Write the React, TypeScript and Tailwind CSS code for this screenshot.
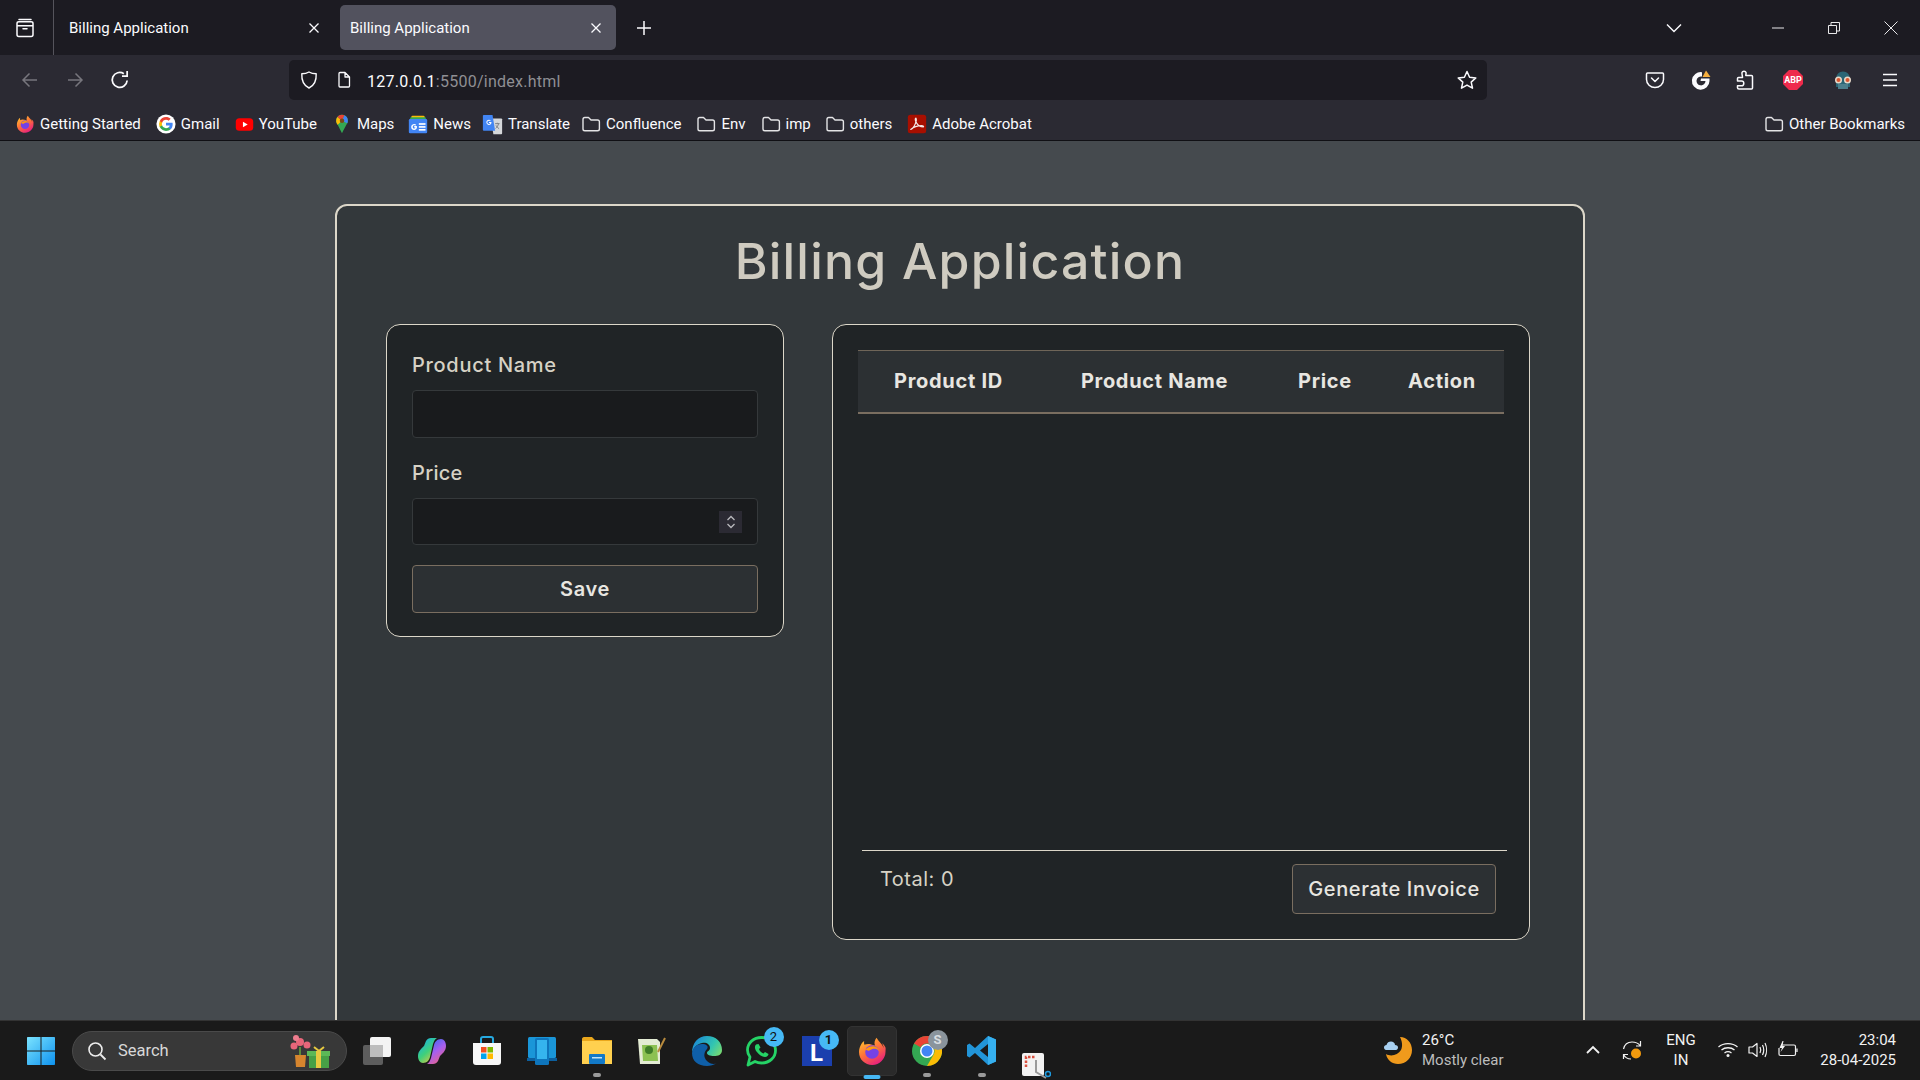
import { ReactNode } from 'react';

const ui = "font-['Roboto',sans-serif]";
const pop = "font-['Inter',sans-serif]";

function Svg({ size = 20, vb = 24, className = '', children }: { size?: number; vb?: number; className?: string; children: ReactNode }) {
  return (
    <svg width={size} height={size} viewBox={`0 0 ${vb} ${vb}`} fill="none" className={`shrink-0 ${className}`}>
      {children}
    </svg>
  );
}

function FolderIcon() {
  return (
    <Svg size={20} vb={20}>
      <path d="M2 5.500C2 4.400 2.800 3.500 3.800 3.500H7.500L10 6H16.500C17.600 6 18.400 6.800 18.400 7.800V15C18.400 16 17.600 16.800 16.500 16.800H3.800C2.800 16.800 2 16 2 15V5.500Z" stroke="#e4e4e6" strokeWidth="1.400" strokeLinejoin="round" />
    </Svg>
  );
}

function FirefoxIcon({ size = 20 }: { size?: number }) {
  return (
    <Svg size={size} vb={32}>
      <defs>
        <linearGradient id="ffBody" x1="8" y1="4" x2="24" y2="30" gradientUnits="userSpaceOnUse">
          <stop offset="0" stopColor="#ffbd2e" />
          <stop offset="0.45" stopColor="#ff7139" />
          <stop offset="1" stopColor="#e31587" />
        </linearGradient>
      </defs>
      <path d="M29.500 12.500C28.800 10.800 27.300 9 26.100 8.300C27 10.200 27.500 11.800 27.700 13C25.900 8.500 22.900 6.800 20.500 2.800C18.800 5 17.800 8 19 10.500C14 8.500 10.500 8.500 8.500 9.800C8 8.800 7.900 7.200 8.200 6C6.800 6.900 5.800 8.200 5.100 9.500C4.100 11.300 3 14 3 17C3 24.500 9 30 16.300 30C23.500 30 29.500 24 29.500 16.800C29.500 15.300 29.800 14 29.500 12.500Z" fill="url(#ffBody)" />
      <circle cx="16" cy="17" r="6.800" fill="#7542e5" />
      <path d="M9.500 15C11 12 14.500 10.800 17.500 11.200C20.500 11.600 22.500 13.500 23 16C21.500 13.800 18.500 13.500 16.500 14C14.500 14.500 13 16.500 12 15.500C11 14.800 10 14.800 9.500 15Z" fill="#ff980e" />
    </Svg>
  );
}

function GoogleIcon() {
  return (
    <Svg size={20} vb={24}>
      <circle cx="12" cy="12" r="11.500" fill="#fff" />
      <path d="M20 12.200c0-.6-.1-1.200-.2-1.700H12v3.300h4.500c-.2 1-.8 1.900-1.700 2.500v2.100h2.700c1.600-1.500 2.500-3.600 2.500-6.200Z" fill="#4285f4" />
      <path d="M12 20.300c2.200 0 4.100-.7 5.500-2l-2.700-2.100c-.7.500-1.700.8-2.800.8-2.200 0-4-1.400-4.700-3.400H4.500v2.100c1.400 2.800 4.200 4.600 7.500 4.600Z" fill="#34a853" />
      <path d="M7.300 13.600c-.4-1-.4-2.200 0-3.200V8.300H4.500a8.300 8.300 0 0 0 0 7.400l2.800-2.100Z" fill="#fbbc05" />
      <path d="M12 7c1.200 0 2.300.4 3.200 1.200l2.400-2.400C16.100 4.500 14.200 3.700 12 3.700c-3.300 0-6.100 1.800-7.500 4.600l2.800 2.100C8 8.400 9.800 7 12 7Z" fill="#ea4335" />
    </Svg>
  );
}

function YouTubeIcon() {
  return (
    <Svg size={19} vb={24}>
      <rect x="1" y="4" width="22" height="16" rx="4.500" fill="#f00" />
      <path d="M10 8.500V15.500L16 12L10 8.500Z" fill="#fff" />
    </Svg>
  );
}

function MapsIcon() {
  return (
    <Svg size={20} vb={24}>
      <path d="M12 1C7.900 1 5 4.100 5 8c0 2 .8 3.500 1.800 5L12 23c1.700-3.400 3.400-6.300 5.200-10 1-1.500 1.800-3 1.800-5 0-3.900-2.900-7-7-7Z" fill="#34a853" />
      <path d="M6.800 13C5.800 11.500 5 10 5 8c0-1.700.6-3.300 1.600-4.500L12 8 6.800 13Z" fill="#fbbc05" />
      <path d="M6.600 3.500C7.900 2 9.800 1 12 1c1.100 0 2.100.2 3 .6L12 8 6.600 3.500Z" fill="#ea4335" />
      <path d="M15 1.600C17.400 2.700 19 5.100 19 8c0 1.200-.3 2.200-.7 3.100L12 8l3-6.400Z" fill="#4285f4" />
      <circle cx="12" cy="8" r="2.700" fill="#7a4a14" />
    </Svg>
  );
}

function NewsIcon() {
  return (
    <Svg size={20} vb={24}>
      <rect x="4" y="2" width="16" height="6" rx="1.500" fill="#fbbc05" />
      <rect x="2.500" y="4" width="19" height="5" rx="1.500" fill="#34a853" />
      <rect x="1" y="6" width="22" height="17" rx="1.500" fill="#4285f4" />
      <rect x="13" y="11" width="8" height="2" fill="#fff" />
      <rect x="13" y="14.500" width="8" height="2" fill="#fff" />
      <rect x="13" y="18" width="8" height="2" fill="#fff" />
      <path d="M10.500 14.500H7.500V16.200H9C8.800 17 8.200 17.400 7.400 17.400C6.400 17.400 5.700 16.600 5.700 15.500C5.700 14.400 6.400 13.600 7.400 13.600C7.900 13.600 8.300 13.800 8.600 14.100L9.900 12.900C9.300 12.300 8.400 11.900 7.400 11.900C5.400 11.900 3.800 13.500 3.800 15.500C3.800 17.500 5.400 19.100 7.400 19.100C9.400 19.100 10.800 17.700 10.800 15.600C10.800 15.200 10.600 14.800 10.500 14.500Z" fill="#fff" />
    </Svg>
  );
}

function TranslateIcon() {
  return (
    <Svg size={21} vb={24}>
      <path d="M10 5H22C22.600 5 23 5.400 23 6V22C23 22.600 22.600 23 22 23H13L10 5Z" fill="#d5d7da" />
      <path d="M2 1H12L15 19H2C1.400 19 1 18.600 1 18V2C1 1.400 1.400 1 2 1Z" fill="#4285f4" />
      <path d="M8 6.500C6.300 6.500 5 7.900 5 9.500C5 11.200 6.300 12.500 8 12.500C9.600 12.500 10.800 11.400 10.800 9.700V9.200H8V10.300H9.500C9.300 11 8.800 11.400 8 11.400C6.900 11.400 6.100 10.500 6.100 9.500C6.100 8.500 6.900 7.600 8 7.600C8.500 7.600 8.900 7.800 9.200 8L10 7.300C9.500 6.800 8.800 6.500 8 6.500Z" fill="#fff" />
      <path d="M15 11H20M17.500 10V11M19 11C18.500 13 17 15.500 15.500 16.500M16 13C16.800 14.500 18 16 19.500 16.800" stroke="#7b7f85" strokeWidth="1.100" />
    </Svg>
  );
}

function AcrobatIcon() {
  return (
    <Svg size={20} vb={24}>
      <rect x="1" y="1" width="22" height="22" rx="3" fill="#a80f00" />
      <path d="M4.500 18.500C7 17.500 9.800 13 11 8.500C11.400 6.500 11 5 10.500 5C9.800 5.500 10 8 11.500 10.800C13.300 14 16 15.500 19.500 15.500C20.500 15 19.500 14 17.500 14C13.500 14 8 15.500 4.500 18.500Z" stroke="#f6e9e6" strokeWidth="1.500" strokeLinejoin="round" />
    </Svg>
  );
}

function Bookmark({ icon, label, className }: { icon: ReactNode; label: string; className: string }) {
  return (
    <div className={`flex items-center gap-[5px] ${className}`}>
      {icon}
      <span className="whitespace-nowrap">{label}</span>
    </div>
  );
}

function TabClose() {
  return (
    <Svg size={16} vb={16}>
      <path d="M3.500 3.500L12.500 12.500M12.500 3.500L3.500 12.500" stroke="#fbfbfe" strokeWidth="1.300" />
    </Svg>
  );
}

function TabStrip() {
  return (
    <div className={`flex h-[55px] items-center bg-[#1c1b22] text-[15px] text-[#fbfbfe] ${ui}`}>
      <div className="flex h-full w-[54px] items-center justify-center border-r border-[#55545c] pr-[4px]">
        <Svg size={22} vb={22}>
          <path d="M5 2.500H17M3 6.500C3 5.400 3.800 4.800 4.800 4.800H17.200C18.200 4.800 19 5.400 19 6.500V17.500C19 18.800 18.200 19.500 17.200 19.500H4.800C3.800 19.500 3 18.800 3 17.500V6.500ZM3 8.800H19M9 11.800H13" stroke="#fbfbfe" strokeWidth="1.500" strokeLinecap="round" />
        </Svg>
      </div>
      <div className="flex h-full w-[286px] items-center justify-between pl-[15px] pr-[18px]">
        <span className="pt-[2px]">Billing Application</span>
        <TabClose />
      </div>
      <div className="flex h-[45px] w-[276px] items-center justify-between rounded-[5px] bg-[#52525e] pl-[10px] pr-[12px]">
        <span className="pt-[2px]">Billing Application</span>
        <TabClose />
      </div>
      <div className="ml-[18px]">
        <Svg size={20} vb={20}>
          <path d="M10 3V17M3 10H17" stroke="#fbfbfe" strokeWidth="1.500" />
        </Svg>
      </div>
      <div className="ml-auto mr-[67px]">
        <Svg size={18} vb={18}>
          <path d="M2 5.500L9 12.500L16 5.500" stroke="#fbfbfe" strokeWidth="1.400" />
        </Svg>
      </div>
      <div className="flex w-[170px] items-center justify-between pl-[21px] pr-[21px]">
        <Svg size={14} vb={14}>
          <path d="M1 7H13" stroke="#e8e8ea" strokeWidth="1" />
        </Svg>
        <Svg size={14} vb={14}>
          <path d="M1.500 4.500H9.500V12.500H1.500V4.500ZM4 4.500V1.500H12.500V10H9.500" stroke="#e8e8ea" strokeWidth="1" />
        </Svg>
        <Svg size={16} vb={16}>
          <path d="M1.500 1.500L14.500 14.500M14.500 1.500L1.500 14.500" stroke="#e8e8ea" strokeWidth="1" />
        </Svg>
      </div>
    </div>
  );
}

function Toolbar() {
  return (
    <div className={`flex h-[50px] items-center bg-[#2b2a33] ${ui}`}>
      <div className="flex w-[289px] items-center pl-[20px]">
        <Svg size={20} vb={20}>
          <path d="M17 10H3.500M9.500 3.500L3 10L9.500 16.500" stroke="#77767d" strokeWidth="1.500" />
        </Svg>
        <Svg size={20} vb={20} className="ml-[25px]">
          <path d="M3 10H16.500M10.500 3.500L17 10L10.500 16.500" stroke="#77767d" strokeWidth="1.500" />
        </Svg>
        <Svg size={22} vb={20} className="ml-[24px]">
          <path d="M16.500 10.500A6.800 6.800 0 1 1 13.500 4.300M16.500 1.800V6.500H11.800" stroke="#fbfbfe" strokeWidth="1.600" />
        </Svg>
      </div>
      <div className="flex h-[40px] w-[1198px] items-center rounded-[5px] bg-[#1c1b22] pl-[10px] pr-[9px]">
        <Svg size={20} vb={20}>
          <path d="M10 2C7.500 3.500 5 3.800 2.800 3.800C2.500 10 4.500 15.500 10 18C15.500 15.500 17.500 10 17.200 3.800C15 3.800 12.500 3.500 10 2Z" stroke="#fbfbfe" strokeWidth="1.400" strokeLinejoin="round" />
        </Svg>
        <Svg size={18} vb={18} className="ml-[16px]">
          <path d="M4 2.500C4 1.900 4.500 1.500 5 1.500H10L14.500 6V15C14.500 15.600 14 16 13.500 16H5C4.500 16 4 15.600 4 15V2.500ZM10 1.500V6H14.500" stroke="#fbfbfe" strokeWidth="1.300" strokeLinejoin="round" />
        </Svg>
        <span className="ml-[14px] pt-[3px] text-[16px] tracking-[0.25px] text-[#fbfbfe]">
          127.0.0.1<span className="text-[#8f8f94]">:5500/index.html</span>
        </span>
        <Svg size={22} vb={22} className="ml-auto">
          <path d="M11 2.500L13.600 8.200L19.800 8.900L15.200 13.100L16.500 19.200L11 16.100L5.500 19.200L6.800 13.100L2.200 8.900L8.400 8.200L11 2.500Z" stroke="#fbfbfe" strokeWidth="1.500" strokeLinejoin="round" />
        </Svg>
      </div>
      <div className="flex flex-1 items-center pl-[158px]">
        <Svg size={20} vb={20}>
          <path d="M2.500 3H17.500C18 3 18.500 3.500 18.500 4V9.500C18.500 14 14.500 17.500 10 17.500C5.500 17.500 1.500 14 1.500 9.500V4C1.500 3.500 2 3 2.500 3ZM6.500 8L10 11.500L13.500 8" stroke="#fbfbfe" strokeWidth="1.500" strokeLinecap="round" strokeLinejoin="round" />
        </Svg>
        <Svg size={22} vb={22} className="ml-[25px]">
          <path d="M19.500 12A8.800 8.800 0 1 1 12 3.200V7.500A4.500 4.500 0 1 0 15.500 12H10.500L11 9.500H19.500V12Z" fill="#fbfbfe" />
          <path d="M16 1.500L20.500 8H12.500L16 1.500Z" fill="#f5ae3d" />
        </Svg>
        <Svg size={22} vb={22} className="ml-[22px]">
          <path d="M8 3.500C8.500 1.800 11.500 1.800 12 3.500C12.300 4.500 11.800 5 11.800 6.500H17.500C18.200 6.500 18.500 7 18.500 7.500V19C18.500 19.700 18 20 17.500 20H5C4 20 3.500 19.500 3.500 18.800V16.800H7.500C9 16.800 9.800 15.500 9.800 14.200C9.800 12.800 8.800 12 7.500 12H3.500V9.500C3.500 9 4 8.500 4.500 8.500H8.500C8.500 6.500 7.700 5 8 3.500Z" stroke="#fbfbfe" strokeWidth="1.500" strokeLinejoin="round" />
        </Svg>
        <Svg size={22} vb={22} className="ml-[26px]">
          <path d="M7 1H15L21 7V15L15 21H7L1 15V7L7 1Z" fill="#ee2a4c" />
          <text x="11" y="14.300" textAnchor="middle" fontSize="9" fontWeight="700" fill="#fff" fontFamily="Roboto, sans-serif">ABP</text>
        </Svg>
        <Svg size={24} vb={24} className="ml-[27px]">
          <path d="M5 11C5 6.500 8 3.500 12 3.500C16 3.500 19 6.500 19 11V19H5V11Z" fill="#2a6675" />
          <rect x="7" y="16" width="10" height="5" fill="#4c7f8c" />
          <circle cx="7.500" cy="12" r="3.500" fill="#e7d9c9" />
          <circle cx="16.500" cy="12" r="3.500" fill="#e7d9c9" />
          <circle cx="7.500" cy="12" r="2" fill="#d9552e" />
          <circle cx="16.500" cy="12" r="2" fill="#d9552e" />
        </Svg>
        <Svg size={18} vb={18} className="ml-[26px]">
          <path d="M2 3.500H16M2 9H16M2 14.500H16" stroke="#fbfbfe" strokeWidth="1.500" />
        </Svg>
      </div>
    </div>
  );
}

function BookmarksBar() {
  return (
    <div className={`flex h-[36px] items-center border-b border-[#101014] bg-[#2b2a33] pl-[15px] pr-[15px] pt-[3px] text-[15px] text-[#fbfbfe] ${ui}`}>
      <Bookmark className="mr-[15px]" icon={<FirefoxIcon />} label="Getting Started" />
      <Bookmark className="mr-[15px]" icon={<GoogleIcon />} label="Gmail" />
      <Bookmark className="mr-[15px]" icon={<YouTubeIcon />} label="YouTube" />
      <Bookmark className="mr-[14px]" icon={<MapsIcon />} label="Maps" />
      <Bookmark className="mr-[11px]" icon={<NewsIcon />} label="News" />
      <Bookmark className="mr-[11px]" icon={<TranslateIcon />} label="Translate" />
      <Bookmark className="mr-[15px]" icon={<FolderIcon />} label="Confluence" />
      <Bookmark className="mr-[15px]" icon={<FolderIcon />} label="Env" />
      <Bookmark className="mr-[14px]" icon={<FolderIcon />} label="imp" />
      <Bookmark className="mr-[15px]" icon={<FolderIcon />} label="others" />
      <Bookmark className="" icon={<AcrobatIcon />} label="Adobe Acrobat" />
      <Bookmark className="ml-auto" icon={<FolderIcon />} label="Other Bookmarks" />
    </div>
  );
}

function ProductForm() {
  return (
    <div className={`h-[313px] w-[398px] shrink-0 rounded-[14px] border-[1.500px] border-[#dcd7c9] bg-[#202426] px-[25px] pt-[26px] ${pop}`}>
      <label className="block h-[29px] text-[20px] leading-[29px] font-medium tracking-[0.7px] text-[#d6d2c5]">Product Name</label>
      <div className="mt-[10px] h-[48px] rounded-[4px] border border-[#35393b] bg-[#191b1d]" />
      <label className="mt-[21px] block h-[29px] text-[20px] leading-[29px] font-medium tracking-[0.3px] text-[#d6d2c5]">Price</label>
      <div className="mt-[10px] flex h-[47px] items-center justify-end rounded-[4px] border border-[#35393b] bg-[#191b1d] pr-[15px]">
        <div className="flex h-[22px] w-[23px] items-center justify-center bg-[#2b2a33]">
          <Svg size={16} vb={16}>
            <path d="M4.500 6L8 2.500L11.500 6M4.500 10L8 13.500L11.500 10" stroke="#b9b9bd" strokeWidth="1.300" />
          </Svg>
        </div>
      </div>
      <button className="mt-[20px] h-[48px] w-full rounded-[4px] border border-[#7a6e60] bg-[#2c3033] text-[20px] font-semibold tracking-[0.6px] text-[#e8e6e1]">
        Save
      </button>
    </div>
  );
}

function ProductTable() {
  return (
    <div className={`flex h-[616px] w-[698px] shrink-0 flex-col rounded-[14px] border-[1.500px] border-[#dcd7c9] bg-[#202426] pl-[25px] pt-[25px] ${pop}`}>
      <table className="w-[646px] table-fixed border-collapse">
        <thead>
          <tr className="h-[62px] border-t border-b-2 border-t-[#6f6558] border-b-[#7a6e60] bg-[#2c3033] text-[20px] tracking-[0.7px] text-[#e8e6e1]">
            <th className="w-[181px] text-center font-bold">Product ID</th>
            <th className="w-[231px] text-center font-bold">Product Name</th>
            <th className="w-[110px] text-center font-bold">Price</th>
            <th className="w-[124px] text-center font-bold">Action</th>
          </tr>
        </thead>
      </table>
      <div className="flex-1" />
      <div className="mb-[24px] ml-[4px] flex h-[65px] w-[645px] items-start justify-between border-t border-[#dcd7c9] pr-[11px] pt-[13px]">
        <span className="pl-[18px] text-[20px] leading-[30px] tracking-[0.5px] text-[#d6d2c5]">Total: 0</span>
        <button className="h-[50px] w-[204px] rounded-[4px] border border-[#7a6e60] bg-[#2c3033] text-[20px] font-medium tracking-[0.6px] text-[#e8e6e1]">
          Generate Invoice
        </button>
      </div>
    </div>
  );
}

function Page() {
  return (
    <main className="min-h-0 flex-1 overflow-hidden bg-[#454a4e] pl-[335px] pt-[63px]">
      <div className="h-[1000px] w-[1250px] rounded-[12px] border-2 border-[#dcd7c9] bg-[#33383b] pl-[49px] pt-[22px]">
        <h1 className={`-ml-[49px] h-[70px] text-center text-[50px] leading-[66px] font-medium tracking-[1.200px] text-[#cfcbc0] ${pop}`}>
          Billing Application
        </h1>
        <div className="mt-[26px] flex items-start gap-[48px]">
          <ProductForm />
          <ProductTable />
        </div>
      </div>
    </main>
  );
}

function WinLogo() {
  return (
    <Svg size={30} vb={30}>
      <defs>
        <linearGradient id="win" x1="0" y1="0" x2="30" y2="30" gradientUnits="userSpaceOnUse">
          <stop offset="0" stopColor="#7fe6ff" />
          <stop offset="1" stopColor="#0a8fee" />
        </linearGradient>
      </defs>
      <path d="M1 2C1 1.400 1.400 1 2 1H14.500V14.500H1V2ZM15.500 1H28C28.600 1 29 1.400 29 2V14.500H15.500V1ZM1 15.500H14.500V29H2C1.400 29 1 28.600 1 28V15.500ZM15.500 15.500H29V28C29 28.600 28.600 29 28 29H15.500V15.500Z" fill="url(#win)" />
    </Svg>
  );
}

function Slot({ children, dot, className = '' }: { children: ReactNode; dot?: boolean; className?: string }) {
  return (
    <div className={`relative flex h-[59px] w-[55px] shrink-0 items-center justify-center ${className}`}>
      {children}
      {dot && <div className="absolute bottom-[3px] left-1/2 h-[4px] w-[8px] -translate-x-1/2 rounded-full bg-[#9a9a9a]" />}
    </div>
  );
}

function Badge({ children, className }: { children: ReactNode; className: string }) {
  return (
    <div className={`absolute flex h-[20px] w-[20px] items-center justify-center rounded-full text-[13px] ${className}`}>
      {children}
    </div>
  );
}

function Taskbar() {
  return (
    <div className={`flex h-[60px] items-center border-t border-[#333] bg-[#1a1a1a] text-[#f2f2f2] ${ui}`}>
      <div className="ml-[26px] mr-[16px]">
        <WinLogo />
      </div>
      <div className="flex h-[40px] w-[275px] items-center rounded-full border border-[#4a4a4a] bg-[#383838] pl-[14px] pr-[15px]">
        <Svg size={20} vb={20}>
          <circle cx="8.500" cy="8.500" r="6.500" stroke="#ededed" strokeWidth="1.600" />
          <path d="M13.500 13.500L18.500 18.500" stroke="#ededed" strokeWidth="1.800" />
        </Svg>
        <span className="ml-[11px] pt-[2px] text-[16.500px] text-[#d8d8d8]">Search</span>
        <Svg size={44} vb={44} className="ml-auto">
          <circle cx="13" cy="13" r="4" fill="#e8667a" />
          <circle cx="7" cy="17" r="3.500" fill="#e8667a" />
          <circle cx="20" cy="16" r="3.500" fill="#e8667a" />
          <circle cx="9" cy="9" r="3" fill="#ee7d8e" />
          <path d="M13 18V26" stroke="#5d8a3a" strokeWidth="2" />
          <path d="M8 26H19L18 38H9L8 26Z" fill="#d6852e" />
          <rect x="22" y="24" width="20" height="15" fill="#47a046" />
          <rect x="20" y="22" width="23" height="5" fill="#5cb857" />
          <rect x="29" y="22" width="5" height="17" fill="#e7c940" />
          <path d="M27 18L32 22L37 18" stroke="#e7c940" strokeWidth="2" />
        </Svg>
      </div>
      <div className="ml-[2px] flex items-center">
        <Slot>
          <Svg size={30} vb={30}>
            <rect x="8" y="1" width="21" height="20" rx="2" fill="#f4f4f4" />
            <rect x="1" y="9" width="20" height="20" rx="2" fill="#6a6a6a" fillOpacity="0.85" />
            <rect x="8" y="9" width="13" height="12" fill="#bdbdbd" />
          </Svg>
        </Slot>
        <Slot>
          <Svg size={30} vb={30}>
            <defs>
              <linearGradient id="cp1" x1="2" y1="5" x2="20" y2="25" gradientUnits="userSpaceOnUse">
                <stop offset="0" stopColor="#19b2e8" />
                <stop offset="0.5" stopColor="#3fd07a" />
                <stop offset="1" stopColor="#f5c73a" />
              </linearGradient>
              <linearGradient id="cp2" x1="12" y1="3" x2="29" y2="25" gradientUnits="userSpaceOnUse">
                <stop offset="0" stopColor="#2a6cf0" />
                <stop offset="0.5" stopColor="#a65ff0" />
                <stop offset="1" stopColor="#f2637e" />
              </linearGradient>
            </defs>
            <path d="M9 5C10 3 12 2 14 2H20C18 3 17 5 16 8L13 21C12.300 24 10 27 6 27C3 27 1 24 1 20C1 15 5 12 7 10L9 5Z" fill="url(#cp1)" />
            <path d="M21 25C20 27 18 28 16 28H10C12 27 13 25 14 22L17 9C17.700 6 20 3 24 3C27 3 29 6 29 10C29 15 25 18 23 20L21 25Z" fill="url(#cp2)" />
          </Svg>
        </Slot>
        <Slot>
          <Svg size={30} vb={30}>
            <path d="M9 7V3C9 1.500 10 1 11 1H19C20 1 21 1.500 21 3V7" stroke="#26a9e0" strokeWidth="2" />
            <path d="M1 7H29V26C29 28 28 29 26 29H4C2 29 1 28 1 26V7Z" fill="#f7f7f7" />
            <rect x="9" y="11" width="5.500" height="5.500" fill="#f25022" />
            <rect x="15.500" y="11" width="5.500" height="5.500" fill="#7fba00" />
            <rect x="9" y="17.500" width="5.500" height="5.500" fill="#00a4ef" />
            <rect x="15.500" y="17.500" width="5.500" height="5.500" fill="#ffb900" />
          </Svg>
        </Slot>
        <Slot>
          <Svg size={30} vb={30}>
            <rect x="1" y="1" width="28" height="21" rx="1.500" fill="#1a96d8" />
            <rect x="0" y="22" width="30" height="3" fill="#0c5f9e" />
            <rect x="8" y="2" width="14" height="27" rx="1.500" fill="#0e75bc" />
            <rect x="10" y="4" width="10" height="19" fill="#35b4ee" />
          </Svg>
        </Slot>
        <Slot dot>
          <Svg size={30} vb={30}>
            <path d="M0 3C0 2 .8 1 2 1H10L13 4H30V28H0V3Z" fill="#eaa71c" />
            <rect x="0" y="5" width="30" height="23" fill="#ffd04f" />
            <rect x="7" y="18" width="16" height="10" rx="1" fill="#1279c8" />
            <rect x="10" y="21" width="10" height="1.500" fill="#bfe3f7" />
          </Svg>
        </Slot>
        <Slot>
          <Svg size={30} vb={30}>
            <path d="M1 3H20L23 6V28H3L1 3Z" fill="#e4ecd4" />
            <path d="M5 9H20L21 25H6L5 9Z" fill="#8cc152" />
            <circle cx="12" cy="14" r="4" fill="#3f7d28" />
            <path d="M21 16L28 2" stroke="#b88a3d" strokeWidth="2" />
          </Svg>
        </Slot>
        <Slot>
          <Svg size={30} vb={30}>
            <defs>
              <linearGradient id="edge" x1="3" y1="3" x2="28" y2="20" gradientUnits="userSpaceOnUse">
                <stop offset="0" stopColor="#1b8ad6" />
                <stop offset="0.6" stopColor="#32c5b0" />
                <stop offset="1" stopColor="#7cdb6e" />
              </linearGradient>
            </defs>
            <path d="M15 0C24 0 30 6 30 14C30 19 26 20 22 20C18 20 15 19 15 17C15 15 18 15 18 12C18 8 14 6 10 7C5 8 1 12 0 17C0 7 6 0 15 0Z" fill="url(#edge)" />
            <path d="M0 17C1 11 5 8 10 8C14 8 17 10 15 13C12 16 11 21 15 25C18 28 22 29 25 27C22 29 18 30 15 30C6 30 0 25 0 17Z" fill="#0f5fa8" />
          </Svg>
        </Slot>
        <Slot>
          <div className="relative">
            <Svg size={34} vb={34}>
              <path d="M3 31L5 23C3.500 21 2.500 18.500 2.500 16C2.500 9 8.500 3.500 16.500 3.500C24.500 3.500 30.500 9 30.500 16.500C30.500 23.500 24.500 29 16.500 29C14 29 12 28.500 10 27.500L3 31Z" stroke="#25d366" strokeWidth="2.800" strokeLinejoin="round" />
              <path d="M11 10.500C9.500 12 9.500 14.500 11.500 17.500C14 21 17.500 23 20 23C22 23 23.500 21.500 23.500 20L20 18L18.500 19.500C16.500 19 14.500 17 14 15L15.500 13.500L13.500 10L11 10.500Z" fill="#25d366" />
            </Svg>
            <Badge className="-right-[5px] -top-[7px] bg-[#46b9f5] text-[#111]">2</Badge>
          </div>
        </Slot>
        <Slot>
          <div className="relative flex h-[30px] w-[30px] items-center justify-center bg-[#1b3fae] pt-[4px] text-[24px] font-bold text-white">
            L
            <Badge className="-right-[7px] -top-[6px] bg-[#46b9f5] text-[#111]">1</Badge>
          </div>
        </Slot>
        <Slot className="rounded-[5px]">
          <div className="flex h-[50px] w-[50px] items-center justify-center rounded-[5px] border border-[#333] bg-[#2a2a2a]">
            <FirefoxIcon size={32} />
          </div>
          <div className="absolute bottom-[1px] left-1/2 h-[4px] w-[17px] -translate-x-1/2 rounded-full bg-[#46b9f5]" />
        </Slot>
        <Slot dot>
          <div className="relative">
            <Svg size={30} vb={30}>
              <circle cx="15" cy="15" r="15" fill="#34a853" />
              <path d="M15 0A15 15 0 0 1 28 7.500H15A7.500 7.500 0 0 0 8.500 11.300L2 7.500A15 15 0 0 1 15 0Z" fill="#ea4335" />
              <path d="M28 7.500A15 15 0 0 1 15 30L21.500 18.800A7.500 7.500 0 0 0 21.500 11.300L28 7.500Z" fill="#fbbc05" />
              <circle cx="15" cy="15" r="7" fill="#fff" />
              <circle cx="15" cy="15" r="5.500" fill="#4285f4" />
            </Svg>
            <Badge className="-right-[6px] -top-[6px] bg-[#8a949c] font-bold text-[#d8dde0]">S</Badge>
          </div>
        </Slot>
        <Slot dot>
          <Svg size={31} vb={31}>
            <path d="M22 1L30 4.500V26.500L22 30L9 18L3.500 22.500L1 21V10L3.500 8.500L9 13L22 1ZM22 9L14 15.500L22 22V9Z" fill="#2295d8" />
            <path d="M22 1L30 4.500V26.500L22 30V1Z" fill="#36b0ef" />
          </Svg>
        </Slot>
        <div className="relative h-[59px] w-[40px] shrink-0">
          <div className="absolute left-[12px] top-[31px]">
            <Svg size={30} vb={30}>
              <rect x="1" y="1" width="22" height="23" rx="2" fill="#f2f2f2" />
              <path d="M5 15V5H15" stroke="#d9503f" strokeWidth="2.500" strokeDasharray="2.500 1.500" />
              <path d="M15 8V20L25 26" stroke="#9a9a9a" strokeWidth="2" />
              <circle cx="27" cy="22" r="2.500" stroke="#1e9be0" strokeWidth="1.500" />
            </Svg>
          </div>
        </div>
      </div>
      <div className="ml-auto flex items-center pb-[2px]">
        <Svg size={30} vb={30}>
          <path d="M17 2C24 2 29 8 29 15C29 23 23 29 15 29C9 29 4 25 3 19C8 22 15 20 18 15C20 11 19 6 17 2Z" fill="#f09a1c" />
          <path d="M3 15C2 15 1 14 1 12.500C1 11 2 10 3.500 10C4 7.500 6 6.500 8 6.500C10 6.500 12 8 12 10C14 10 15 11 15 12.500C15 14 14 15 13 15H3Z" fill="#a8d0f0" />
        </Svg>
        <div className="ml-[9px] w-[163px] text-[15px] leading-[20px]">
          <div className="text-[#f2f2f2]">26°C</div>
          <div className="text-[#bdbdbd]">Mostly clear</div>
        </div>
        <Svg size={16} vb={16}>
          <path d="M2 11L8 5L14 11" stroke="#f2f2f2" strokeWidth="1.800" />
        </Svg>
        <Svg size={24} vb={24} className="ml-[20px]">
          <path d="M2.500 11C3.500 6.500 7 4 11 4C14 4 17 5 19 7.500M19.500 3V8H15M2.500 16.500C4 19.500 7 21 10 21M2.500 21V16.500H7" stroke="#f2f2f2" strokeWidth="1.200" />
          <circle cx="15" cy="15.500" r="5" fill="#f29a0e" />
        </Svg>
        <div className="ml-[18px] w-[36px] text-center text-[15px] leading-[20px]">
          <div>ENG</div>
          <div>IN</div>
        </div>
        <Svg size={22} vb={22} className="ml-[18px]">
          <path d="M1.500 8C6.500 3.500 15.500 3.500 20.500 8M4.500 11C8 8 14 8 17.500 11M7.500 14C9.500 12.500 12.500 12.500 14.500 14" stroke="#f2f2f2" strokeWidth="1.300" />
          <circle cx="11" cy="16.500" r="1.500" fill="#f2f2f2" />
        </Svg>
        <Svg size={22} vb={22} className="ml-[8px]">
          <path d="M2 8H5.500L10 4.500V17.500L5.500 14H2V8Z" stroke="#f2f2f2" strokeWidth="1.200" strokeLinejoin="round" />
          <path d="M13 8C14 10 14 12 13 14M15.500 6C17 9 17 13 15.500 16M18 4C20 8 20 14 18 18" stroke="#f2f2f2" strokeWidth="1.200" />
        </Svg>
        <Svg size={22} vb={22} className="ml-[8px]">
          <path d="M5 6H17C18 6 18.500 6.500 18.500 7.500V15C18.500 16 18 16.500 17 16.500H3.500C2.500 16.500 2 16 2 15V9M20 9.500V13" stroke="#f2f2f2" strokeWidth="1.200" />
          <path d="M5.500 2L2.500 9H5L3.500 13L8 7H5.500L6.500 2H5.500Z" fill="#f2f2f2" />
        </Svg>
        <div className="ml-[15px] mr-[24px] w-[82px] text-right text-[15px] leading-[20px]">
          <div>23:04</div>
          <div>28-04-2025</div>
        </div>
      </div>
    </div>
  );
}

export default function App() {
  return (
    <div className="flex h-screen w-full flex-col overflow-hidden">
      <TabStrip />
      <Toolbar />
      <BookmarksBar />
      <Page />
      <Taskbar />
    </div>
  );
}
